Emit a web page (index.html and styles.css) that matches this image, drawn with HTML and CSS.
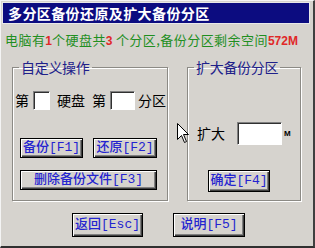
FILE: index.html
```html
<!DOCTYPE html>
<html lang="zh-CN">
<head>
    <meta charset="UTF-8">
    <meta name="viewport" content="width=device-width, initial-scale=1.0">
    <title>多分区备份还原及扩大备份分区</title>
    <link rel="stylesheet" href="styles.css">
</head>
<body>
    <div class="window">
        <div class="titlebar">多分区备份还原及扩大备份分区</div>

        <div class="info">电脑有<span class="num">1</span>个硬盘共<span class="num">3</span> 个分区,备份分区剩余空间<span class="num">572M</span></div>

        <div class="groups">
            <fieldset class="group group-custom">
                <legend>自定义操作</legend>
                <div class="pick-row">
                    <span>第</span>
                    <input type="text" class="box box-disk">
                    <span class="gap">硬盘</span>
                    <span class="gap">第</span>
                    <input type="text" class="box box-part">
                    <span class="gap-s">分区</span>
                </div>
                <div class="btn-row">
                    <button class="btn btn-f1">备份[F1]</button>
                    <button class="btn btn-f2">还原[F2]</button>
                </div>
                <button class="btn btn-f3">删除备份文件[F3]</button>
            </fieldset>

            <fieldset class="group group-expand">
                <legend>扩大备份分区</legend>
                <div class="expand-row">
                    <span>扩大</span>
                    <input type="text" class="box box-size">
                    <span class="unit">M</span>
                </div>
                <button class="btn btn-f4">确定[F4]</button>
            </fieldset>
        </div>

        <div class="bottom-row">
            <button class="btn btn-esc">返回[Esc]</button>
            <button class="btn btn-f5">说明[F5]</button>
        </div>

        <svg class="cursor" width="13" height="21" viewBox="0 0 13 21">
            <path d="M0.5 0.5 L0.5 16.5 L4.5 12.5 L7.5 19.5 L9.5 18.5 L6.5 11.5 L11.5 11.5 Z" fill="#fff" stroke="#000" stroke-width="1"/>
        </svg>
    </div>
</body>
</html>
```

FILE: styles.css
```css
body {
    margin: 0;
    font-family: "Noto Sans CJK SC", sans-serif;
    font-size: 14px;
    color: #000;
}
.window {
    position: relative;
    width: 315px;
    height: 248px;
    box-sizing: border-box;
    background-color: #d6d3ce;
    border-style: solid;
    border-width: 1px 2px 2px 1px;
    border-color: #f4f4f4 #404040 #303030 #f4f4f4;
    overflow: hidden;
}
.titlebar {
    margin: 2px 4px 0 2px;
    height: 20px;
    line-height: 20px;
    padding-left: 5px;
    background-color: #0c0c80;
    color: #fff;
    font-weight: bold;
    font-size: 14px;
    letter-spacing: 0.4px;
    box-shadow: 0 0 0 1px #e8e8e8;
}
.info {
    margin-top: 7px;
    padding-left: 4px;
    height: 20px;
    line-height: 20px;
    font-size: 13px;
    letter-spacing: 0.45px;
    color: #1f8f1f;
    white-space: nowrap;
}
.num {
    color: #e02828;
    font-family: "Liberation Sans", sans-serif;
    font-size: 12px;
    font-weight: bold;
    letter-spacing: 0;
}
.groups {
    display: flex;
    gap: 19px;
    margin-top: 7px;
    padding-left: 11px;
}
.group {
    box-sizing: border-box;
    margin: 0;
    padding: 0;
    border: 1px solid #8c8a85;
    box-shadow: inset 1px 1px 0 #fff, 1px 1px 0 #fff;
    height: 144px;
}
.group legend {
    margin-left: 6px;
    padding: 0 2px;
    line-height: 20px;
    font-size: 14px;
    letter-spacing: -0.3px;
    color: #20208a;
}
.group-custom {
    width: 156px;
}
.group-expand {
    width: 114px;
}
.pick-row {
    display: flex;
    align-items: center;
    margin-top: 14px;
    padding-left: 2px;
    height: 19px;
}
.pick-row span,
.expand-row span {
    line-height: 19px;
}
.box {
    box-sizing: border-box;
    margin: 0;
    padding: 0;
    background: #fff;
    border: 1px solid;
    border-color: #808080 #fff #fff #808080;
    box-shadow: inset 1px 1px 0 #303030;
    outline: none;
}
.box-disk {
    width: 17px;
    height: 19px;
    margin-left: 4px;
}
.box-part {
    width: 25px;
    height: 19px;
    margin-left: 4px;
}
.gap {
    margin-left: 7px;
}
.gap-s {
    margin-left: 3px;
}
.btn {
    box-sizing: border-box;
    margin: 0;
    padding: 0;
    height: 20px;
    background-color: #d6d3ce;
    border: 1px solid #000;
    box-shadow: inset 1px 1px 0 #fff, inset -1px -1px 0 #404040, inset -2px -2px 0 #808080;
    color: #2424d0;
    font-family: "Liberation Mono", "Noto Sans CJK SC", monospace;
    font-size: 13px;
    font-weight: 500;
    line-height: 16px;
    cursor: pointer;
}
.btn-row {
    display: flex;
    gap: 10px;
    margin-top: 28px;
    padding-left: 7px;
}
.btn-f1 {
    width: 63px;
}
.btn-f2 {
    width: 64px;
}
.btn-f3 {
    display: block;
    width: 137px;
    margin: 12px 0 0 7px;
}
.expand-row {
    display: flex;
    align-items: center;
    margin-top: 45px;
    padding-left: 9px;
    height: 23px;
}
.box-size {
    width: 45px;
    height: 23px;
    margin-left: 12px;
}
.unit {
    margin-left: 2px;
    font-family: "Liberation Sans", sans-serif;
    font-size: 8px;
    font-weight: bold;
}
.btn-f4 {
    display: block;
    width: 62px;
    height: 22px;
    margin: 25px 0 0 20px;
}
.bottom-row {
    display: flex;
    gap: 30px;
    margin-top: 12px;
    padding-left: 71px;
}
.btn-esc {
    width: 71px;
    height: 24px;
}
.btn-f5 {
    width: 72px;
    height: 24px;
}
.cursor {
    position: absolute;
    left: 176px;
    top: 122px;
}
```
